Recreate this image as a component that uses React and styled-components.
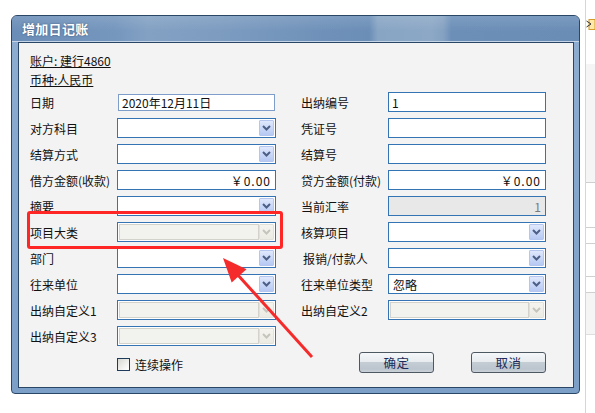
import React from "react";
import styled, { createGlobalStyle } from "styled-components";

const GlobalStyle = createGlobalStyle`
  html, body { margin: 0; padding: 0; background: #fff; }
  body {
    font-family: "Noto Sans CJK SC", "Liberation Sans", sans-serif;
    font-size: 12px;
    color: #111;
  }
`;

const Page = styled.div`
  position: relative;
  width: 595px;
  height: 413px;
  overflow: hidden;
  display: flex;
  background: #fff;
`;

const DialogArea = styled.div`
  padding: 15px 0 0 11px;
`;

const Window = styled.div`
  box-sizing: border-box;
  width: 569px;
  height: 379px;
  border: 1px solid #2b4767;
  border-radius: 6px 6px 4px 4px;
  background: linear-gradient(to bottom, #8eadd0, #7c9fc8);
  display: flex;
  flex-direction: column;
  overflow: hidden;
`;

const TitleBar = styled.div`
  height: 25px;
  flex: none;
  display: flex;
  align-items: center;
  padding-left: 10px;
  background:
    linear-gradient(to bottom, rgba(255,255,255,0.12), rgba(255,255,255,0) 60%),
    linear-gradient(
      to right,
      #6a8db7 0%,
      #7596bd 18%,
      #83a1c3 24%,
      #7d9cc0 36%,
      #6f91b9 55%,
      #6b8eb7 63%,
      #88a5c4 64.5%,
      #8ca8c6 74%,
      #86a2c2 76%,
      #6c8fb8 77.5%,
      #6a8db6 100%
    );
  border-bottom: 1px solid #c5d4e6;
`;

const TitleText = styled.span`
  color: #fff;
  font-weight: bold;
  font-size: 13px;
  letter-spacing: 0.3px;
  text-shadow: 0 0 2px rgba(20, 40, 70, 0.6);
`;

const Content = styled.div`
  box-sizing: border-box;
  width: 556px;
  height: 346px;
  margin-left: 6px;
  border: 1px solid #2a4666;
  background: #f3f3f3;
  padding: 8px 0 0 11px;
  display: flex;
  flex-direction: column;
`;

const InfoLine = styled.div`
  height: 19px;
  line-height: 19px;
  text-decoration: underline;
  font-size: 12px;
`;

const FormGrid = styled.div`
  display: grid;
  grid-template-columns: 87px 159px 25px 87px 158px;
  grid-auto-rows: 26px;
  align-items: center;
`;

const Label = styled.div`
  grid-column: ${(p) => p.$col};
  font-size: 12px;
  white-space: nowrap;
  padding-left: ${(p) => p.$indent || 0}px;
`;

const Box = styled.div`
  grid-column: ${(p) => p.$col};
  box-sizing: border-box;
  height: ${(p) => p.$h || 20}px;
  width: ${(p) => p.$w || "100%"};
  margin-left: ${(p) => p.$ml || 0}px;
  border: 1px solid ${(p) => (p.$light ? "#7f9dc9" : "#3574b4")};
  background: ${(p) => (p.$gray ? "#e8e8e8" : "#fff")};
  color: ${(p) => (p.$gray ? "#7a7a7a" : "#111")};
  display: flex;
  align-items: center;
  justify-content: ${(p) => (p.$right ? "flex-end" : "flex-start")};
  padding: ${(p) => (p.$right ? "0 4px 0 0" : "0 0 0 3px")};
  font-size: 12px;
  white-space: nowrap;
`;

const Money = styled.span`
  letter-spacing: 1px;
`;

const ComboBox = styled.div`
  grid-column: ${(p) => p.$col};
  box-sizing: border-box;
  height: 20px;
  border: 1px solid #3574b4;
  background: #fff;
  display: flex;
  align-items: stretch;
  padding: 1px;
`;

const ComboText = styled.div`
  flex: 1;
  box-sizing: border-box;
  display: flex;
  align-items: center;
  padding-left: 2px;
  font-size: 12px;
  background: ${(p) => (p.$disabled ? "#f2f2ef" : "#fff")};
  border: 1px solid ${(p) => (p.$disabled ? "#d4d3cb" : "transparent")};
`;

const DropButton = styled.div`
  width: 15px;
  flex: none;
  box-sizing: border-box;
  border: 1px solid ${(p) => (p.$disabled ? "#e2e1d9" : "#b4c6ee")};
  border-radius: 1px;
  background: ${(p) =>
    p.$disabled
      ? "linear-gradient(to bottom, #f5f4ef, #ebeae3)"
      : "linear-gradient(to bottom, #dfe8fc, #b6c9f3)"};
  display: flex;
  align-items: center;
  justify-content: center;
`;

const Chevron = ({ disabled }) => (
  <svg width="9" height="6" viewBox="0 0 9 6">
    <path
      d="M1 1 L4.5 4.5 L8 1"
      fill="none"
      stroke={disabled ? "#c6c5bd" : "#4c5f86"}
      strokeWidth="2"
    />
  </svg>
);

const CheckCell = styled.label`
  grid-column: 2;
  display: flex;
  align-items: center;
  gap: 5px;
  font-size: 12px;
  margin-top: 4px;
`;

const CheckBox = styled.span`
  box-sizing: border-box;
  width: 13px;
  height: 13px;
  border: 1px solid #1f3b5b;
  background: linear-gradient(135deg, #d6d6d2, #f6f6f4 70%, #fff);
`;

const ButtonCell = styled.div`
  grid-column: 4 / 6;
  display: flex;
  justify-content: flex-end;
  gap: 37px;
`;

const Button = styled.button`
  box-sizing: border-box;
  width: 75px;
  height: 21px;
  border: 1px solid #4e5863;
  border-radius: 3px;
  background: linear-gradient(
    to bottom,
    #f5f7f9 0%,
    #e8ecef 45%,
    #c4ccd4 50%,
    #bcc5ce 85%,
    #cbd2d9 100%
  );
  color: #1c2b59;
  font-family: "Noto Sans CJK SC", sans-serif;
  font-size: 12.5px;
  padding: 0;
  letter-spacing: 0.5px;
`;

const Strip = styled.div`
  margin-left: 5px;
  width: 10px;
  border-left: 1px solid #d6d6d6;
  display: flex;
  flex-direction: column;
`;

const StripSeg = styled.div`
  flex: none;
  height: ${(p) => p.$h}px;
  background: ${(p) => p.$bg || "#fff"};
  border-bottom: 1px solid ${(p) => p.$line || "transparent"};
  padding-top: ${(p) => p.$pt || 0}px;
`;

const Highlight = styled.div`
  position: absolute;
  left: 27px;
  top: 211px;
  width: 256px;
  height: 38px;
  box-sizing: border-box;
  border: 3px solid #ff2626;
  border-radius: 3px;
  pointer-events: none;
`;

const ArrowLayer = styled.svg`
  position: absolute;
  left: 0;
  top: 0;
  pointer-events: none;
`;

const Combo = ({ col, text, disabled }) => (
  <ComboBox $col={col}>
    <ComboText $disabled={disabled}>{text}</ComboText>
    <DropButton $disabled={disabled}>
      <Chevron disabled={disabled} />
    </DropButton>
  </ComboBox>
);

const renderField = (f, col) => {
  if (!f) return null;
  switch (f.type) {
    case "date":
      return (
        <Box key={col} $col={col} $light $h={17} $w="157px" $ml={1}>
          {f.text}
        </Box>
      );
    case "text":
      return (
        <Box key={col} $col={col}>
          {f.text}
        </Box>
      );
    case "money":
      return (
        <Box key={col} $col={col} $right>
          <Money>￥0.00</Money>
        </Box>
      );
    case "rate":
      return (
        <Box key={col} $col={col} $right $gray>
          1
        </Box>
      );
    case "combo":
      return <Combo key={col} col={col} text={f.text} />;
    case "disabled":
      return <Combo key={col} col={col} disabled />;
    default:
      return null;
  }
};

const rows = [
  { l: "日期", lf: { type: "date", text: "2020年12月11日" }, r: "出纳编号", rf: { type: "text", text: "1" } },
  { l: "对方科目", lf: { type: "combo" }, r: "凭证号", rf: { type: "text" } },
  { l: "结算方式", lf: { type: "combo" }, r: "结算号", rf: { type: "text" } },
  { l: "借方金额(收款)", lf: { type: "money" }, r: "贷方金额(付款)", rf: { type: "money" } },
  { l: "摘要", lf: { type: "combo" }, r: "当前汇率", rf: { type: "rate" } },
  { l: "项目大类", lf: { type: "disabled" }, r: "核算项目", rf: { type: "combo" } },
  { l: "部门", lf: { type: "combo" }, r: "报销/付款人", rf: { type: "combo" }, rIndent: 2 },
  { l: "往来单位", lf: { type: "combo" }, r: "往来单位类型", rf: { type: "combo", text: "忽略" } },
  { l: "出纳自定义1", lf: { type: "disabled" }, r: "出纳自定义2", rf: { type: "disabled" } },
  { l: "出纳自定义3", lf: { type: "disabled" } },
];

export default function App() {
  return (
    <Page>
      <GlobalStyle />
      <DialogArea>
        <Window>
          <TitleBar>
            <TitleText>增加日记账</TitleText>
          </TitleBar>
          <Content>
            <InfoLine>账户: 建行4860</InfoLine>
            <InfoLine>币种:人民币</InfoLine>
            <FormGrid>
              {rows.map((row, i) => (
                <React.Fragment key={i}>
                  <Label $col={1}>{row.l}</Label>
                  {renderField(row.lf, 2)}
                  {row.r && (
                    <Label $col={4} $indent={row.rIndent}>
                      {row.r}
                    </Label>
                  )}
                  {renderField(row.rf, 5)}
                </React.Fragment>
              ))}
              <CheckCell>
                <CheckBox />
                连续操作
              </CheckCell>
              <ButtonCell>
                <Button>确定</Button>
                <Button>取消</Button>
              </ButtonCell>
            </FormGrid>
          </Content>
        </Window>
      </DialogArea>
      <Strip>
        <StripSeg $h={47} $pt={16}>
          <svg width="9" height="11" viewBox="0 0 9 11">
            <rect x="3" y="0.5" width="6" height="10" fill="#ffe9a8" stroke="#d49a2a" />
            <path d="M0.5 2 L5 5 L0.5 8" fill="none" stroke="#333" strokeWidth="1" />
          </svg>
        </StripSeg>
        <StripSeg $h={118} $bg="#f5f5f5" $line="#cfcfcf" />
        <StripSeg $h={44} $line="#d0d0d0" />
        <StripSeg $h={15} $line="#d0d0d0" />
        <StripSeg $h={32} $line="#d0d0d0" />
        <StripSeg $h={15} $line="#d0d0d0" />
        <StripSeg $h={41} $bg="#f5f5f5" $line="#dedede" />
      </Strip>
      <Highlight />
      <ArrowLayer width="595" height="413" viewBox="0 0 595 413">
        <line x1="312" y1="357" x2="237" y2="274" stroke="#f52b2b" strokeWidth="3" />
        <polygon points="223,258 246.5,269.2 231.7,282.6" fill="#f52b2b" />
      </ArrowLayer>
    </Page>
  );
}
